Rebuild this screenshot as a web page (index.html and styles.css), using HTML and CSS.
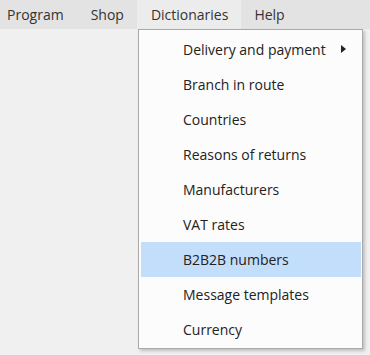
FILE: index.html
```html
<!DOCTYPE html>
<html lang="en">
<head>
    <meta charset="UTF-8">
    <meta name="viewport" content="width=device-width, initial-scale=1.0">
    <title>Dictionaries</title>
    <link rel="stylesheet" href="styles.css">
</head>
<body>

    <div class="menu-bar">
        <div class="menu-item first">Program</div>
        <div class="menu-item">Shop</div>
        <div class="menu-item active">Dictionaries</div>
        <div class="menu-item">Help</div>
    </div>

    <div class="dropdown">
        <div class="dropdown-item">Delivery and payment <span class="submenu-arrow"></span></div>
        <div class="dropdown-item">Branch in route</div>
        <div class="dropdown-item">Countries</div>
        <div class="dropdown-item">Reasons of returns</div>
        <div class="dropdown-item">Manufacturers</div>
        <div class="dropdown-item">VAT rates</div>
        <div class="dropdown-item selected">B2B2B numbers</div>
        <div class="dropdown-item">Message templates</div>
        <div class="dropdown-item">Currency</div>
    </div>

</body>
</html>
```

FILE: styles.css
```css
body {
    margin: 0;
    font-family: "Open Sans", "Noto Sans", sans-serif;
    font-size: 14px;
    background-color: #f0f0f0;
    color: #222;
}
.menu-bar {
    display: flex;
    height: 29px;
    background: #e3e3e3;
}
.menu-item {
    display: flex;
    align-items: center;
    padding: 0 13px;
    color: #333;
}
.menu-item.first {
    padding-left: 7px;
    padding-right: 14px;
}
.menu-item.active {
    padding: 0 13px 0 14px;
    background: #ececec;
}
.dropdown {
    position: absolute;
    left: 138px;
    top: 29px;
    width: 225px;
    box-sizing: border-box;
    padding: 2px 1px 1px 2px;
    background: #fcfcfc;
    border: 1px solid #a9a9a9;
    box-shadow: 2px 2px 3px rgba(0, 0, 0, 0.2);
}
.dropdown-item {
    position: relative;
    display: flex;
    align-items: center;
    height: 35px;
    padding-left: 42px;
}
.dropdown-item.selected {
    background: #c3defa;
}
.submenu-arrow {
    position: absolute;
    left: 200px;
    top: 13px;
    width: 0;
    height: 0;
    border-top: 4px solid transparent;
    border-bottom: 4px solid transparent;
    border-left: 5px solid #222;
}
```
